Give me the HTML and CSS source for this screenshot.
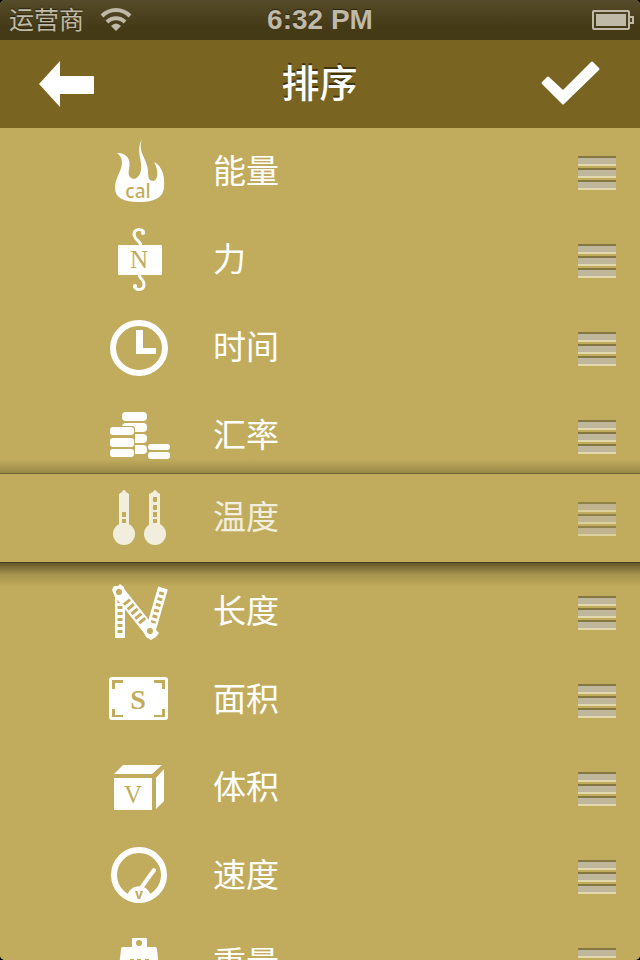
FILE: index.html
```html
<!DOCTYPE html>
<html lang="zh-CN">
<head>
  <meta charset="UTF-8">
  <meta name="viewport" content="width=device-width, initial-scale=1.0">
  <title>排序</title>
  <link rel="stylesheet" href="styles.css">
</head>
<body>
  <div class="screen">
    <div class="status-bar">
      <div class="carrier">
        <span>运营商</span>
        <svg class="wifi" width="32" height="24" viewBox="0 0 32 24" aria-hidden="true">
          <g fill="none" stroke="#c0b9a8" stroke-width="4">
            <path d="M2 8 C10 0 22 0 30 8"/>
            <path d="M7 14 C12 9 20 9 25 14"/>
          </g>
          <path d="M11 18 Q16 13 21 18 L16 23 Z" fill="#c0b9a8"/>
        </svg>
      </div>
      <span class="clock">6:32 PM</span>
      <svg class="battery" width="42" height="20" viewBox="0 0 42 20" aria-hidden="true">
        <rect x="1" y="1" width="36" height="18" rx="1" fill="none" stroke="#c0b9a8" stroke-width="2"/>
        <rect x="4" y="4" width="30" height="12" fill="#c0b9a8"/>
        <path d="M38 7 H41 V13 H38" fill="none" stroke="#c0b9a8" stroke-width="2"/>
      </svg>
    </div>

    <header class="nav-bar">
      <button type="button" class="nav-btn" aria-label="返回">
        <svg width="56" height="46" viewBox="0 0 56 46">
          <path d="M0 23 L21 0 V15 H54 Q55 15 55 16 V32 Q55 33 54 33 H21 V46 Z" fill="#fff"/>
        </svg>
      </button>
      <h1>排序</h1>
      <button type="button" class="nav-btn" aria-label="完成">
        <svg width="60" height="46" viewBox="0 0 60 46">
          <path d="M7 16 Q8 15 9 16 L23 29 L51 1 Q52 0 53 1 L59 7 Q60 8 59 9 L24 43 Q23 44 22 43 L2 23 Q1 22 2 21 Z" fill="#fff"/>
        </svg>
      </button>
    </header>

    <ul class="sort-list">
      <li class="row">
        <svg class="icon" viewBox="0 0 64 88" aria-hidden="true">
          <path d="M35 11 C30 20 33 27 34 36 C35 44 32 50 27 51 C22 50 21 47 22 41 C24 31 20 25 10 25 C16 29 16 36 13 43 C10 50 8 54 8 60 C8 70 17 74 32 74 C50 74 57 68 57 58 C58 48 55 38 47 34 C51 41 52 50 47 53 C42 53 41 50 41 43 C41 32 30 24 35 11 Z"/>
          <text class="glyph sans" x="31" y="70" font-size="19">cal</text>
        </svg>
        <span class="label">能量</span>
        <button type="button" class="handle" aria-label="移动 能量"><span></span><span></span><span></span></button>
      </li>
      <li class="row">
        <svg class="icon" viewBox="0 0 64 88" aria-hidden="true">
          <path class="hook" d="M34 30 C34 25 27 24 27 18 C27 13 34 12 37 16"/>
          <path class="hook" d="M32 58 C32 63 37 63 37 68 C37 75 29 75 27 70"/>
          <circle cx="36" cy="17" r="2"/>
          <circle cx="28" cy="70" r="2"/>
          <rect x="11" y="29" width="44" height="30" rx="1"/>
          <text class="glyph" x="32" y="52" font-size="25">N</text>
        </svg>
        <span class="label">力</span>
        <button type="button" class="handle" aria-label="移动 力"><span></span><span></span><span></span></button>
      </li>
      <li class="row">
        <svg class="icon" viewBox="0 0 64 88" aria-hidden="true">
          <ellipse cx="32" cy="44" rx="26" ry="25" fill="none" stroke="#fff" stroke-width="6"/>
          <path d="M29 26 H36 V44 H49 V50 H29 Z"/>
        </svg>
        <span class="label">时间</span>
        <button type="button" class="handle" aria-label="移动 时间"><span></span><span></span><span></span></button>
      </li>
      <li class="row">
        <svg class="icon" viewBox="0 0 64 88" aria-hidden="true">
          <rect x="15" y="20" width="25" height="9" rx="4"/>
          <rect x="15" y="31" width="25" height="9" rx="4"/>
          <rect x="20" y="42" width="20" height="9" rx="4"/>
          <rect x="20" y="53" width="20" height="9" rx="4"/>
          <rect class="cut" x="2" y="34" width="26" height="32" rx="3"/>
          <rect x="3" y="35" width="24" height="8" rx="3"/>
          <rect x="3" y="46" width="24" height="9" rx="3"/>
          <rect x="3" y="57" width="24" height="8" rx="3"/>
          <rect x="41" y="52" width="22" height="6" rx="3"/>
          <rect x="41" y="60" width="22" height="7" rx="3"/>
        </svg>
        <span class="label">汇率</span>
        <button type="button" class="handle" aria-label="移动 汇率"><span></span><span></span><span></span></button>
      </li>
      <li class="row dragging">
        <svg class="icon" viewBox="0 0 64 88" aria-hidden="true">
          <path d="M12 54 V20 L15 18 Q17 14 19 18 L22 20 V54 Z"/>
          <circle cx="17" cy="60" r="11"/>
          <path d="M42 54 V20 L46 18 Q48 14 50 18 L53 20 V54 Z"/>
          <circle cx="48" cy="60" r="11"/>
          <path class="cut" d="M15 38 h4 v5 h-4 Z M15 45 h4 v4 h-4 Z M46 23 h4 v5 h-4 Z M46 31 h4 v5 h-4 Z M46 38 h4 v5 h-4 Z M46 45 h4 v4 h-4 Z"/>
        </svg>
        <span class="label">温度</span>
        <button type="button" class="handle" aria-label="移动 温度"><span></span><span></span><span></span></button>
      </li>
      <li class="row">
        <svg class="icon" viewBox="0 0 64 88" aria-hidden="true">
          <path d="M8 26 H18 V70 H8 Z"/>
          <path class="rungs" d="M13 32 V67"/>
          <path class="ruler" d="M56 20 L44 61"/>
          <path class="rungs" d="M55 24 L46 55"/>
          <path class="ruler wide" d="M12 24 L43 63"/>
          <path class="rungs wide" d="M19 33 L37 55"/>
          <path d="M5 22 L7 18 L11 18 L13 16 L17 19 L18 26 L13 31 L8 29 Z"/>
          <path d="M36 62 L44 56 L48 61 L52 65 L49 69 L44 72 L39 69 Z"/>
          <circle class="cut" cx="12" cy="24" r="3"/>
          <circle class="cut" cx="43" cy="63" r="3"/>
        </svg>
        <span class="label">长度</span>
        <button type="button" class="handle" aria-label="移动 长度"><span></span><span></span><span></span></button>
      </li>
      <li class="row">
        <svg class="icon" viewBox="0 0 64 88" aria-hidden="true">
          <rect x="2" y="21" width="59" height="43" rx="3"/>
          <path class="cut" d="M5 24 h11 v3 h-8 v6 h-3 Z M58 24 h-11 v3 h8 v6 h3 Z M5 61 h11 v-2 h-8 v-6 h-3 Z M58 61 h-11 v-2 h8 v-6 h3 Z"/>
          <text class="glyph bold" x="31" y="53" font-size="28">S</text>
        </svg>
        <span class="label">面积</span>
        <button type="button" class="handle" aria-label="移动 面积"><span></span><span></span><span></span></button>
      </li>
      <li class="row">
        <svg class="icon" viewBox="0 0 64 88" aria-hidden="true">
          <path d="M7 34 H45 V66 H7 Z M16 21 H55 L45 30 H7 Z M49 34 L57 25 V57 L49 65 Z"/>
          <text class="glyph" x="26" y="59" font-size="25">V</text>
        </svg>
        <span class="label">体积</span>
        <button type="button" class="handle" aria-label="移动 体积"><span></span><span></span><span></span></button>
      </li>
      <li class="row">
        <svg class="icon" viewBox="0 0 64 88" aria-hidden="true">
          <circle cx="32" cy="43" r="25" fill="none" stroke="#fff" stroke-width="6"/>
          <path d="M47 38 L34 56" stroke="#fff" stroke-width="4" stroke-linecap="round"/>
          <path d="M20 67 C20 50 44 50 44 67 Q32 75 20 67 Z"/>
          <text class="glyph sans bold" x="32" y="67" font-size="14">v</text>
        </svg>
        <span class="label">速度</span>
        <button type="button" class="handle" aria-label="移动 速度"><span></span><span></span><span></span></button>
      </li>
      <li class="row">
        <svg class="icon" viewBox="0 0 64 88" aria-hidden="true">
          <path d="M25 27 V19 Q25 18 26 18 H39 Q40 18 40 19 V27 H48 Q50 27 50 29 L54 66 H10 L14 29 Q14 27 16 27 Z"/>
          <circle class="cut" cx="32" cy="23" r="3"/>
          <path class="cut" d="M23 39 h4 v2 h-4 Z M30 39 h4 v2 h-4 Z M38 39 h4 v2 h-4 Z"/>
        </svg>
        <span class="label">重量</span>
        <button type="button" class="handle" aria-label="移动 重量"><span></span><span></span><span></span></button>
      </li>
    </ul>
  </div>
</body>
</html>
```
FILE: styles.css
```css
/* Base styles */
* {
  margin: 0;
  padding: 0;
  box-sizing: border-box;
}

body {
  background-color: #000;
  color: #fff;
  font-family: 'Liberation Sans', 'Noto Sans CJK SC', sans-serif;
}

button {
  border: none;
  background: none;
  cursor: pointer;
}

.screen {
  height: 100vh;
  display: flex;
  flex-direction: column;
  overflow: hidden;
  border-radius: 5px;
  background-color: #c1ac5d;
}

/* Status bar */
.status-bar {
  flex: none;
  height: 40px;
  padding: 0 6px;
  display: grid;
  grid-template-columns: 1fr auto 1fr;
  align-items: center;
  background: linear-gradient(#564b2a, #443a16 70%);
  color: #c0b9a8;
  text-shadow: 0 -1px 1px #2a230c;
}

.carrier {
  padding-left: 3px;
  display: flex;
  align-items: center;
  gap: 16px;
  font-size: 25px;
  line-height: 40px;
}

.clock {
  font-size: 28px;
  font-weight: bold;
}

.battery {
  justify-self: end;
}

/* Navigation bar */
.nav-bar {
  flex: none;
  height: 88px;
  padding: 0 40px 0 39px;
  display: grid;
  grid-template-columns: 1fr auto 1fr;
  align-items: center;
  background-color: #796521;
}

.nav-btn {
  justify-self: start;
  display: flex;
}

.nav-btn:last-child {
  justify-self: end;
}

.nav-bar h1 {
  font-size: 38px;
  font-weight: 500;
  line-height: 88px;
  text-shadow: 0 -2px 0 #40350f;
}

/* Sortable list */
.sort-list {
  list-style: none;
}

.row {
  height: 88px;
  padding: 0 24px 0 107px;
  display: flex;
  align-items: center;
  background-color: #c1ac5d;
}

.icon {
  flex: none;
  width: 64px;
  height: 88px;
  fill: #fff;
}

.label {
  flex: 1;
  margin-left: 42px;
  font-size: 33px;
  line-height: 88px;
}

.handle {
  width: 38px;
  padding-top: 2px;
  display: flex;
  flex-direction: column;
  gap: 2px;
}

.handle span {
  height: 10px;
  border-top: 2px solid #857741;
  border-bottom: 2px solid #e3d9ae;
  background-color: #bfb69b;
}

/* The row being moved floats over its neighbours */
.dragging {
  position: relative;
  top: -6px;
}

.dragging::before,
.dragging::after {
  content: '';
  position: absolute;
  left: 0;
  right: 0;
}

.dragging::before {
  bottom: 100%;
  height: 14px;
  border-bottom: 1px solid #6f6333;
  background: linear-gradient(rgba(80, 68, 30, 0), rgba(80, 68, 30, 0.35));
}

.dragging::after {
  top: 100%;
  height: 24px;
  border-top: 1px solid #4a4020;
  background: linear-gradient(rgba(64, 53, 20, 0.7), rgba(64, 53, 20, 0.2) 50%, rgba(64, 53, 20, 0));
}

.dragging .icon,
.dragging .label,
.dragging .handle {
  opacity: 0.8;
}

/* Icon parts */
.cut,
.glyph {
  fill: #c1ac5d;
}

.glyph {
  font-family: 'Liberation Serif', serif;
  text-anchor: middle;
}

.glyph.sans {
  font-family: 'Noto Sans', sans-serif;
  font-weight: 500;
}

.glyph.bold {
  font-weight: bold;
}

.hook {
  fill: none;
  stroke: #fff;
  stroke-width: 3px;
}

.ruler {
  stroke: #fff;
  stroke-width: 10px;
}

.rungs {
  stroke: #c1ac5d;
  stroke-width: 5px;
  stroke-dasharray: 3 3;
}

.ruler.wide {
  stroke-width: 12px;
}

.rungs.wide {
  stroke-width: 8px;
}
```
